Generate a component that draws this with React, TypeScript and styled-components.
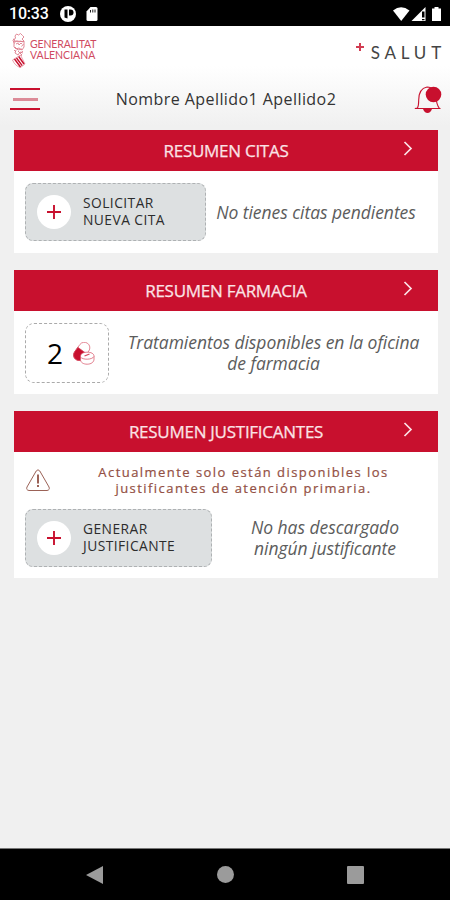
import React from 'react';
import styled, { createGlobalStyle } from 'styled-components';

const RED = '#c8102e';

const GlobalStyle = createGlobalStyle`
  *, *::before, *::after { box-sizing: border-box; }
  body { margin: 0; background: #f0f0f0; font-family: 'Open Sans', 'Noto Sans', sans-serif; }
  svg { display: block; flex: none; }
`;

const Screen = styled.div`
  width: 450px;
  height: 900px;
  display: flex;
  flex-direction: column;
  overflow: hidden;
  background: #f0f0f0;
`;

const StatusBar = styled.div`
  height: 26px;
  flex: none;
  display: flex;
  align-items: center;
  padding: 2px 8px 0 9px;
  background: #000;
  color: #fff;
`;

const Clock = styled.span`
  width: 51px;
  font: 500 16px/24px Roboto, sans-serif;
  letter-spacing: -0.2px;
`;

const Spacer = styled.div`
  flex: 1;
`;

const Top = styled.header`
  height: 104px;
  flex: none;
  background: linear-gradient(#fff 0, #fff 40px, #f0f0f0 100px);
`;

const BrandRow = styled.div`
  height: 48px;
  display: flex;
  align-items: flex-start;
  padding: 7px 8px 0 11px;
`;

const BrandName = styled.div`
  margin: 6px 0 0 3px;
  color: #d04a60;
  font: 400 10.5px/11px Lato, sans-serif;
  white-space: nowrap;
`;

const BrandLine = styled.div<{ $spacing: number }>`
  letter-spacing: ${(p) => p.$spacing}px;
`;

const Salut = styled.div`
  display: flex;
  align-items: flex-start;
  padding-top: 10px;
`;

const SalutName = styled.span`
  margin-left: 7px;
  margin-right: -4px;
  color: #444;
  font: 400 17px/20px Lato, sans-serif;
  letter-spacing: 4.8px;
`;

const UserRow = styled.div`
  height: 50px;
  display: flex;
  align-items: center;
  justify-content: space-between;
  padding: 0 8px 0 10px;
`;

const MenuIcon = styled.div`
  width: 30px;
  height: 22px;
  display: flex;
  flex-direction: column;
  align-items: center;
  justify-content: space-between;
`;

const MenuLine = styled.span<{ $faded?: boolean }>`
  width: ${(p) => (p.$faded ? 25 : 30)}px;
  height: ${(p) => (p.$faded ? 3 : 2)}px;
  background: ${(p) => (p.$faded ? '#dc8b98' : RED)};
`;

const UserName = styled.span`
  margin-left: -2px;
  color: #333;
  font-size: 16px;
  line-height: 22px;
  letter-spacing: 0.43px;
`;

const Cards = styled.main`
  flex: 1;
  display: flex;
  flex-direction: column;
  gap: 17px;
  padding: 0 12px 0 14px;
`;

const CardBox = styled.section`
  background: #fff;
`;

const CardHeader = styled.h2`
  height: 41px;
  margin: 0;
  display: grid;
  grid-template-columns: 44px 1fr 44px;
  align-items: center;
  background: ${RED};
  color: #fbe3e6;
`;

const CardTitle = styled.span`
  grid-column: 2;
  text-align: center;
  font-size: 17px;
  font-weight: 400;
  line-height: 24px;
  letter-spacing: -0.27px;
  -webkit-text-stroke: 0.25px currentColor;
`;

const Chevron = styled.svg`
  margin: -4px 0 0 9px;
`;

const Row = styled.div<{ $height: number }>`
  height: ${(p) => p.$height}px;
  display: flex;
  padding: 12px 12px 0 11px;
`;

const ActionButton = styled.button<{ $width: number }>`
  width: ${(p) => p.$width}px;
  height: 58px;
  flex: none;
  display: flex;
  align-items: center;
  padding: 0 0 0 11px;
  border: 1px dashed #aeb1b3;
  border-radius: 8px;
  background: #dde0e1;
  color: #2c2c2c;
  font-family: inherit;
  text-align: left;
`;

const PlusCircle = styled.span`
  width: 34px;
  height: 34px;
  display: grid;
  place-items: center;
  border-radius: 50%;
  background: #fff;
`;

const ActionLabel = styled.span`
  margin: -2px 0 0 12px;
  font-size: 13.8px;
  line-height: 17px;
  letter-spacing: 0.45px;
  white-space: nowrap;
`;

const Line = styled.span`
  display: block;
`;

const CountBox = styled.div`
  width: 84px;
  height: 60px;
  flex: none;
  display: flex;
  align-items: center;
  gap: 9px;
  padding-left: 21px;
  border: 1px dashed #aaa;
  border-radius: 9px;
  color: #000;
  font-size: 28px;
  line-height: 38px;
`;

const Message = styled.p<{ $top: number; $indent?: number }>`
  flex: 1;
  margin: ${(p) => p.$top}px 0 0;
  padding-left: ${(p) => p.$indent ?? 0}px;
  text-align: center;
  white-space: nowrap;
  color: #5c5c5c;
  font-size: 17.5px;
  font-style: italic;
  line-height: 21px;
  letter-spacing: -0.05px;
`;

const Notice = styled.div`
  height: 45px;
  display: flex;
  padding: 12px 11px 0;
`;

const WarningIcon = styled.svg`
  margin-top: 4px;
`;

const NoticeText = styled.p`
  flex: 1;
  margin: 0 32px 0 41px;
  display: flex;
  flex-direction: column;
  align-items: center;
  white-space: nowrap;
  color: #935044;
  font-size: 13px;
  line-height: 16px;
  letter-spacing: 1.45px;
  -webkit-text-stroke: 0.2px currentColor;
`;

const NavBar = styled.nav`
  height: 52px;
  flex: none;
  display: flex;
  align-items: center;
  justify-content: space-between;
  padding: 0 86px;
  border-top: 1px solid #777;
  background: #000;
`;

function Crest() {
  return (
    <svg width="16" height="35" viewBox="0 0 16 35" fill="none" stroke="#de7d8c" strokeWidth="0.9">
      <path d="M4 3 5.500 1l2 1 2-1.500 2 2 1.500 1.500-2 2 2 2-2 1-1-1-2 1-2-1-2 1-1-2 1.500-2zM3 8l10 .5M3 9v5l2 2 3-1 3 2 2-3V8M5 11l2-1 1 2 2-2 1 1M4 14l3 3 4-1M5 17l-1 3 3 2 2-3 3 1M7 18l4 4-4 2M3 5.500l-1 2 1.500 3M12.500 11l-2 2.500M3 17l2 2M9 20.500l3-2.500" />
      <path d="M1.500 27 9.500 22l4.500 9-4.500 3.500q-5.500-1.500-8-7.500z" fill="#fff" strokeWidth="0.7" />
      <path d="m3.500 26 6 8M5.500 25l5.700 7.700M7.700 23.500l5.300 7.500" stroke={RED} strokeWidth="1.400" />
    </svg>
  );
}

function Bell() {
  return (
    <svg width="28" height="29" viewBox="0 0 28 29">
      <path d="M.8 23.500h25.700M3.500 23c1-2 1.200-4 1.200-8C4.700 7 8 3 13 2c6 0 9.500 5 9.500 12 0 5 1 7 3 9.500M3.500 23l-2.500.5" fill="none" stroke={RED} strokeWidth="1.100" />
      <path d="M9 24h9q-1.500 4-4.500 4T9 24z" fill={RED} />
      <circle cx="19.500" cy="9.500" r="7.800" fill={RED} />
    </svg>
  );
}

function Pills() {
  return (
    <svg width="23" height="23" viewBox="0 0 23 23" fill="#fff" stroke="#d64a60" strokeWidth="0.7">
      <g transform="rotate(36 10 9)">
        <rect x="4.500" y="-.5" width="11" height="20" rx="5.500" strokeWidth=".6" />
        <path d="M4.500 8.500h11V14a5.500 5.500 0 0 1-11 0z" fill={RED} />
      </g>
      <path d="M8.500 14.500c0-3 3-4.300 6.700-4.300s6.800 1.300 6.800 4v3c0 3-3 5-6.800 5s-6.700-1.700-6.700-4.700z" />
      <path d="M8.500 15c2 3 11.500 3 13.500-.5" fill="none" />
      <path d="m12.500 14 5-2" fill="none" strokeWidth="1.300" />
    </svg>
  );
}

function Plus() {
  return (
    <svg width="14" height="14" viewBox="0 0 14 14">
      <path d="M7 0v14M0 7h14" stroke={RED} strokeWidth="1.900" />
    </svg>
  );
}

interface CardProps {
  title: string;
  children: React.ReactNode;
}

function Card({ title, children }: CardProps) {
  return (
    <CardBox>
      <CardHeader>
        <CardTitle>{title}</CardTitle>
        <Chevron width="10" height="15" viewBox="0 0 10 15" fill="none" stroke="#fbe3e6" strokeWidth="1.700">
          <path d="m1.500 1 6.500 6.500L1.500 14" />
        </Chevron>
      </CardHeader>
      {children}
    </CardBox>
  );
}

interface ActionProps {
  width: number;
  lines: string[];
}

function Action({ width, lines }: ActionProps) {
  return (
    <ActionButton $width={width}>
      <PlusCircle><Plus /></PlusCircle>
      <ActionLabel>
        {lines.map((text) => <Line key={text}>{text}</Line>)}
      </ActionLabel>
    </ActionButton>
  );
}

export default function App() {
  return (
    <Screen>
      <GlobalStyle />
      <StatusBar>
        <Clock>10:33</Clock>
        <svg width="40" height="16" viewBox="0 0 40 16" fill="#fff">
          <circle cx="8" cy="8" r="8" />
          <path d="M4.500 3.500h3v9l-3-1z" fill="#000" />
          <path d="M9 3.500h1.500a3 3 0 0 1 0 6H9z" fill="#000" />
          <path d="M30.500 1H36q1.500 0 1.500 1.500v11q0 1.500-1.500 1.500h-8q-1.500 0-1.500-1.500V5.500z" />
          <path d="M30.500 4v2.500M32.800 3.500v3M35 3.500v3" stroke="#000" strokeWidth=".9" />
        </svg>
        <Spacer />
        <svg width="50" height="16" viewBox="0 0 50 16" fill="#fff">
          <path d="M1 4.500Q9 -2 17.500 4.500L9.200 15z" />
          <path d="M19.500 15 33.500 1v14z" />
          <path d="M30 5.500h2.500v6H30zM30 13h2.500v1.200H30z" fill="#000" />
          <path d="M42.500 1h4v1.500H49V15h-9V2.500h2.500z" />
        </svg>
      </StatusBar>
      <Top>
        <BrandRow>
          <Crest />
          <BrandName>
            <BrandLine $spacing={-0.15}>GENERALITAT</BrandLine>
            <BrandLine $spacing={0}>VALENCIANA</BrandLine>
          </BrandName>
          <Spacer />
          <Salut>
            <svg width="8" height="8" viewBox="0 0 8 8">
              <path d="M4 0v8M0 4h8" stroke="#d23c52" strokeWidth="2" />
            </svg>
            <SalutName>SALUT</SalutName>
          </Salut>
        </BrandRow>
        <UserRow>
          <MenuIcon>
            <MenuLine />
            <MenuLine $faded />
            <MenuLine />
          </MenuIcon>
          <UserName>Nombre Apellido1 Apellido2</UserName>
          <Bell />
        </UserRow>
      </Top>
      <Cards>
        <Card title="RESUMEN CITAS">
          <Row $height={82}>
            <Action width={181} lines={['SOLICITAR', 'NUEVA CITA']} />
            <Message $top={19}>No tienes citas pendientes</Message>
          </Row>
        </Card>
        <Card title="RESUMEN FARMACIA">
          <Row $height={83}>
            <CountBox>2<Pills /></CountBox>
            <Message $top={9} $indent={12}>
              <Line>Tratamientos disponibles en la oficina</Line>
              <Line>de farmacia</Line>
            </Message>
          </Row>
        </Card>
        <Card title="RESUMEN JUSTIFICANTES">
          <Notice>
            <WarningIcon width="26" height="24" viewBox="0 0 26 24" fill="none" stroke="#9b6257" strokeWidth="1">
              <path d="M11.200 3Q13 .5 14.800 3l9.200 16q1.200 3-2 3.500H4q-3.200-.5-2-3.500z" />
              <path d="M13 6.500v9M13 17v2" strokeWidth="2" />
            </WarningIcon>
            <NoticeText>
              <Line>Actualmente solo están disponibles los</Line>
              <Line>justificantes de atención primaria.</Line>
            </NoticeText>
          </Notice>
          <Row $height={81}>
            <Action width={187} lines={['GENERAR', 'JUSTIFICANTE']} />
            <Message $top={8} $indent={12}>
              <Line>No has descargado</Line>
              <Line>ningún justificante</Line>
            </Message>
          </Row>
        </Card>
      </Cards>
      <NavBar>
        <svg width="17" height="18" viewBox="0 0 17 18"><path d="M0 9 17 0v18z" fill="#9b9b9b" /></svg>
        <svg width="17" height="17" viewBox="0 0 17 17"><circle cx="8.500" cy="8.500" r="8.500" fill="#9b9b9b" /></svg>
        <svg width="17" height="18" viewBox="0 0 17 18"><rect width="17" height="18" rx="1" fill="#9b9b9b" /></svg>
      </NavBar>
    </Screen>
  );
}
